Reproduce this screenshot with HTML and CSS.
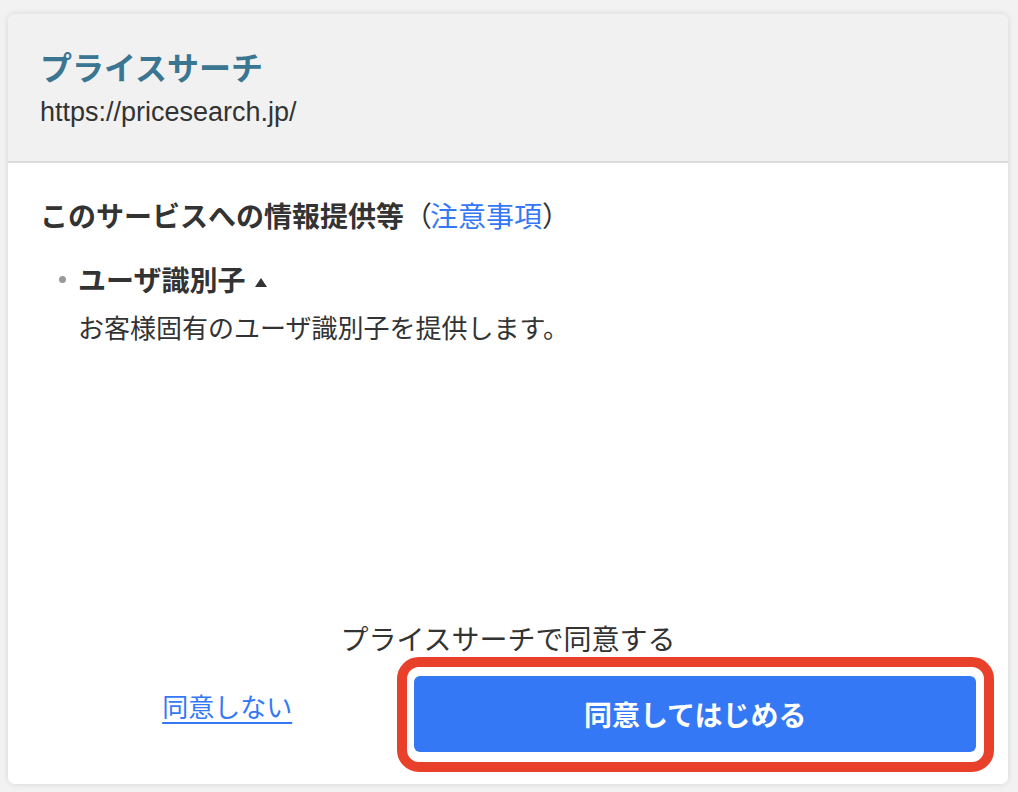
FILE: index.html
```html
<!DOCTYPE html>
<html lang="ja">
<head>
<meta charset="utf-8">
<title>プライスサーチ</title>
<link rel="stylesheet" href="styles.css">
</head>
<body>
<div class="card">
  <header class="card-head">
    <h1 class="app-name">プライスサーチ</h1>
    <div class="app-url">https://pricesearch.jp/</div>
  </header>
  <main class="card-body">
    <h2 class="section-title">このサービスへの情報提供等<span class="paren">（<a class="note-link" href="#">注意事項</a>）</span></h2>
    <ul class="info-list">
      <li class="info-item">
        <div class="info-name">ユーザ識別子<span class="caret"></span></div>
        <p class="info-desc">お客様固有のユーザ識別子を提供します。</p>
      </li>
    </ul>
    <div class="footer">
      <p class="consent-label">プライスサーチで同意する</p>
      <div class="actions">
        <div class="decline-col"><a class="decline" href="#">同意しない</a></div>
        <div class="accept-col">
          <button class="accept" type="button">同意してはじめる</button>
          <span class="highlight"></span>
        </div>
      </div>
    </div>
  </main>
</div>
</body>
</html>
```

FILE: styles.css
```css
* { box-sizing: border-box; }
html, body { margin: 0; }
body {
  background: #f2f2f2;
  padding: 14px 10px 8px 8px;
  font-family: "Liberation Sans", "Noto Sans CJK JP", sans-serif;
  color: #333;
}
.card {
  width: 1000px;
  height: 770px;
  background: #fff;
  border-radius: 7px;
  box-shadow: 0 0 6px rgba(0,0,0,0.12);
  display: flex;
  flex-direction: column;
  overflow: hidden;
}
.card-head {
  background: #f1f1f1;
  border-bottom: 2px solid #dcdcdc;
  height: 149px;
  padding: 32px 32px 0 32px;
}
.app-name {
  margin: 0;
  font-family: "Noto Sans CJK JP", sans-serif;
  font-size: 32px;
  line-height: 40px;
  font-weight: 700;
  color: #3a7591;
}
.app-url {
  margin-top: 10px;
  font-size: 27px;
  line-height: 32px;
  color: #333;
}
.card-body {
  flex: 1;
  display: flex;
  flex-direction: column;
  padding: 34px 32px 32px 32px;
  font-family: "Noto Sans CJK JP", sans-serif;
}
.section-title {
  margin: 0;
  font-size: 28px;
  line-height: 36px;
  font-weight: 700;
  color: #333;
}
.paren { font-weight: 400; letter-spacing: -2px; }
.note-link { color: #3478f6; text-decoration: none; letter-spacing: 0; }
.info-list {
  list-style: none;
  margin: 28px 0 0 0;
  padding: 0 0 0 38px;
}
.info-item { position: relative; }
.info-item::before {
  content: "";
  position: absolute;
  left: -19px;
  top: 15px;
  width: 7px;
  height: 7px;
  border-radius: 50%;
  background: #9a9a9a;
}
.info-name {
  font-size: 28px;
  line-height: 36px;
  font-weight: 700;
  display: flex;
  align-items: center;
}
.caret {
  display: inline-block;
  width: 0;
  height: 0;
  margin-left: 10px;
  margin-top: 6px;
  border-left: 6px solid transparent;
  border-right: 6px solid transparent;
  border-bottom: 9px solid #333;
}
.info-desc {
  margin: 12px 0 0 0;
  font-size: 26px;
  line-height: 36px;
}
.footer { margin-top: auto; }
.consent-label {
  margin: 0;
  text-align: center;
  font-size: 28px;
  line-height: 36px;
}
.actions {
  margin-top: 20px;
  display: flex;
  align-items: center;
}
.decline-col {
  width: 40%;
  text-align: center;
  padding-bottom: 16px;
}
.decline {
  color: #3478f6;
  font-size: 26px;
  line-height: 36px;
  text-decoration: underline;
  text-decoration-thickness: 2px;
  text-underline-offset: 5px;
}
.accept-col {
  width: 60%;
  position: relative;
}
.accept {
  display: block;
  width: 100%;
  height: 76px;
  border: none;
  border-radius: 6px;
  background: #3478f6;
  color: #fff;
  font-family: "Noto Sans CJK JP", sans-serif;
  font-size: 28px;
  font-weight: 700;
  cursor: pointer;
}
.highlight {
  position: absolute;
  left: -17px;
  right: -18px;
  top: -19px;
  bottom: -20px;
  border: 10px solid #e8402a;
  border-radius: 22px;
  pointer-events: none;
}
```
